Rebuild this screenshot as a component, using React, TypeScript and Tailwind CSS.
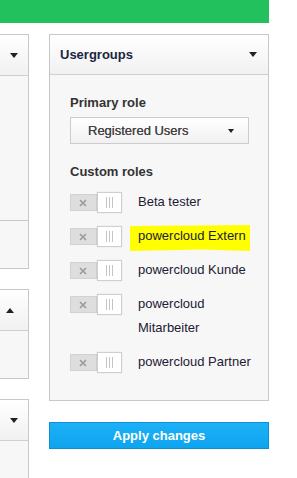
import React from "react";

function Caret({ up = false, className = "", w = 8, h = 5 }: { up?: boolean; className?: string; w?: number; h?: number }) {
  return (
    <svg width={w} height={h} viewBox={`0 0 ${w} ${h}`} className={className}>
      {up ? (
        <path d={`M0 ${h} L${w / 2} 0 L${w} ${h} Z`} fill="#222" />
      ) : (
        <path d={`M0 0 L${w} 0 L${w / 2} ${h} Z`} fill="#222" />
      )}
    </svg>
  );
}

function Toggle() {
  return (
    <div className="relative flex h-[21px] w-[52px] items-center shrink-0">
      <div className="flex h-[17px] w-[28px] items-center justify-center bg-[#dedede] border border-[#d2d2d2]">
        <svg width="8" height="8" viewBox="0 0 8 8">
          <path d="M1 1 L7 7 M7 1 L1 7" stroke="#9a9a9a" strokeWidth="1.6" />
        </svg>
      </div>
      <div className="flex h-[21px] w-[26px] items-center justify-center gap-[2px] bg-white border border-[#cfcfcf] shadow-[0_0_1px_rgba(0,0,0,0.15)]">
        <span className="h-[11px] w-px bg-[#c4c4c4]" />
        <span className="h-[11px] w-px bg-[#c4c4c4]" />
        <span className="h-[11px] w-px bg-[#c4c4c4]" />
      </div>
    </div>
  );
}

function Role({ label, highlight = false }: { label: string; highlight?: boolean }) {
  return (
    <div className="flex items-start gap-[16px]">
      <div className="mt-[2px]">
        <Toggle />
      </div>
      <div className="relative text-[13px] leading-[24px] text-[#1d2033]">
        {highlight && (
          <span className="absolute left-[-8px] top-[1px] h-[26px] w-[120px] bg-[#ffff00] [clip-path:polygon(0_4%,100%_0,100%_100%,60%_94%,0_100%)]" />
        )}
        <span className="relative">{label}</span>
      </div>
    </div>
  );
}

function LeftPanelHeader({ up = false }: { up?: boolean }) {
  return (
    <div className="flex h-[41px] items-center justify-end border-b border-[#cfcfcf] bg-gradient-to-b from-white to-[#f1f1f1]">
      <Caret up={up} className={up ? "mr-[14px]" : "mr-[10px]"} />
    </div>
  );
}

export default function App() {
  return (
    <div
      className="h-[478px] w-[297px] overflow-hidden bg-white"
      style={{ fontFamily: '"Liberation Sans", Arial, sans-serif' }}
    >
      <div className="h-[23px] w-[269px] bg-[#23c05e]" />
      <div className="mt-[11px] flex gap-[20px]">
        {/* left column */}
        <div className="flex w-[29px] flex-col gap-[20px]">
          <div className="border-r border-t border-b border-[#c8c8c8] bg-[#f7f7f7]">
            <LeftPanelHeader />
            <div className="h-[145px] border-b border-[#c8c8c8]" />
            <div className="h-[47px]" />
          </div>
          <div className="border-r border-t border-b border-[#c8c8c8] bg-[#f7f7f7]">
            <LeftPanelHeader up />
            <div className="h-[47px]" />
          </div>
          <div className="border-r border-t border-[#c8c8c8] bg-[#f7f7f7]">
            <LeftPanelHeader />
            <div className="h-[60px]" />
          </div>
        </div>

        {/* right column */}
        <div className="flex w-[220px] flex-col">
          <div className="border border-[#c8c8c8] bg-[#f7f7f7]">
            <div className="flex h-[40px] items-center justify-between border-b border-[#cfcfcf] bg-gradient-to-b from-white to-[#f1f1f1] pl-[10px] pr-[11px]">
              <span className="text-[13px] font-bold text-[#1c2640]">Usergroups</span>
              <Caret />
            </div>
            <div className="pl-[20px] pr-[19px] pt-[20px] pb-[26px]">
              <div className="text-[13px] font-bold leading-[16px] text-[#333]">Primary role</div>
              <div className="mt-[6px] flex h-[27px] items-center justify-between border border-[#cccccc] bg-gradient-to-b from-white to-[#f1f1f1] pl-[17px] pr-[14px]">
                <span className="text-[13px] text-[#444] [text-shadow:0_0_0.4px_#444]">Registered Users</span>
                <Caret w={6} h={4} />
              </div>
              <div className="mt-[20px] text-[13px] font-bold leading-[16px] text-[#333]">Custom roles</div>
              <div className="mt-[10px] mr-[-6px] flex flex-col gap-[10px]">
                <Role label="Beta tester" />
                <Role label="powercloud Extern" highlight />
                <Role label="powercloud Kunde" />
                <Role label="powercloud Mitarbeiter" />
                <Role label="powercloud Partner" />
              </div>
            </div>
          </div>
          <button className="mt-[21px] h-[27px] w-full border border-[#0f8fd6] bg-gradient-to-b from-[#1cb0f6] to-[#0ea4ee] text-[13px] font-bold text-white">
            Apply changes
          </button>
        </div>
      </div>
    </div>
  );
}
